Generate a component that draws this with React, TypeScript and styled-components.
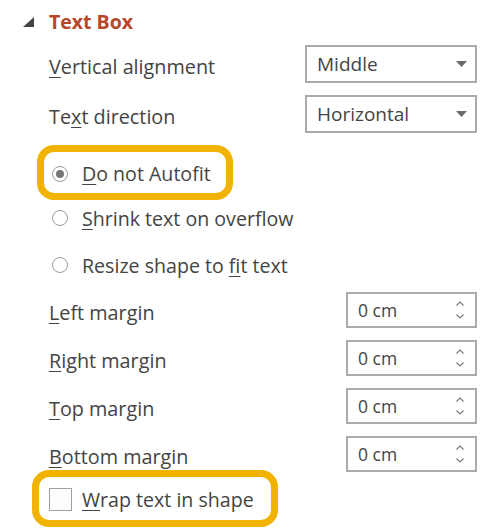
import React from "react";
import styled, { createGlobalStyle } from "styled-components";

const GlobalStyle = createGlobalStyle`
	html, body {
		margin: 0;
		padding: 0;
		background: #ffffff;
	}
	body {
		font-family: "Open Sans", "Noto Sans", sans-serif;
		color: #444444;
	}
`;

const Panel = styled.div`
	width: 493px;
	height: 529px;
	overflow: hidden;
	box-sizing: border-box;
`;

const Header = styled.div`
	display: flex;
	align-items: center;
	height: 42px;
	padding-left: 23px;
	gap: 15px;

	svg {
		margin-top: 1px;
	}
`;

const Title = styled.div`
	font-size: 19.5px;
	font-weight: 700;
	color: #b7472a;
`;

const Body = styled.div`
	display: flex;
	flex-direction: column;
	padding: 0 16px 0 49px;
`;

const FieldRow = styled.div<{ $top: number }>`
	display: flex;
	align-items: center;
	justify-content: space-between;
	margin-top: ${(p) => p.$top}px;
`;

const Label = styled.div`
	font-size: 19.8px;
	padding-top: 4px;
	white-space: nowrap;
`;

const Key = styled.span`
	text-decoration: underline;
	text-underline-offset: 3px;
	text-decoration-thickness: 1px;
`;

const SelectBox = styled.div`
	display: flex;
	align-items: center;
	justify-content: space-between;
	box-sizing: border-box;
	width: 172px;
	height: 38px;
	border: 2px solid #ababab;
	padding: 0 8px 0 10px;
	font-size: 19px;
	background: #fff;
`;

const SpinBox = styled.div`
	display: flex;
	align-items: center;
	justify-content: space-between;
	box-sizing: border-box;
	width: 131px;
	height: 36px;
	border: 2px solid #ababab;
	padding: 0 11px 0 10px;
	font-size: 17.5px;
	background: #fff;
`;

const Arrows = styled.div`
	display: flex;
	flex-direction: column;
	gap: 8px;
`;

const Highlight = styled.div<{ $left: number; $top: number; $padL: number; $padR: number; $gap: number }>`
	align-self: flex-start;
	display: flex;
	align-items: center;
	gap: ${(p) => p.$gap}px;
	box-sizing: border-box;
	margin-left: ${(p) => p.$left}px;
	margin-top: ${(p) => p.$top}px;
	border: 7px solid #f1b300;
	border-radius: 17px;
	padding: 2px ${(p) => p.$padR}px 0 ${(p) => p.$padL}px;
	background: #fff;
`;

const OptionRow = styled.div<{ $top: number }>`
	display: flex;
	align-items: center;
	gap: 14px;
	height: 36px;
	margin-left: 3px;
	margin-top: ${(p) => p.$top}px;
`;

const OptionText = styled.div<{ $line?: number }>`
	font-size: 19.6px;
	white-space: nowrap;
	line-height: ${(p) => (p.$line ? `${p.$line}px` : "normal")};
`;

const Radio = styled.span<{ $checked?: boolean }>`
	display: inline-flex;
	align-items: center;
	justify-content: center;
	box-sizing: border-box;
	width: 16px;
	height: 16px;
	border-radius: 50%;
	border: 1px solid #9a9a9a;
	background: #fff;

	&::after {
		content: "";
		display: ${(p) => (p.$checked ? "block" : "none")};
		width: 8px;
		height: 8px;
		border-radius: 50%;
		background: #777;
	}
`;

const CheckBox = styled.span`
	display: inline-block;
	box-sizing: border-box;
	width: 23px;
	height: 23px;
	border: 1px solid #a0a0a0;
	background: #fdfdfd;
`;

function Caret() {
	return (
		<svg width="11" height="6" viewBox="0 0 11 6">
			<polygon points="0,0 11,0 5.5,6" fill="#6a6a6a" />
		</svg>
	);
}

function Chevron({ up }: { up?: boolean }) {
	return (
		<svg width="8" height="5" viewBox="0 0 8 5">
			<polyline
				points={up ? "0.5,4.5 4,1 7.5,4.5" : "0.5,0.5 4,4 7.5,0.5"}
				fill="none"
				stroke="#777"
				strokeWidth="1.1"
			/>
		</svg>
	);
}

const margins = [
	{ key: "L", rest: "eft margin" },
	{ key: "R", rest: "ight margin" },
	{ key: "T", rest: "op margin" },
	{ key: "B", rest: "ottom margin" },
];

export default function App() {
	return (
		<Panel>
			<GlobalStyle />
			<Header>
				<svg width="11" height="10" viewBox="0 0 11 10">
					<polygon points="11,0 11,10 0,10" fill="#444" />
				</svg>
				<Title>Text Box</Title>
			</Header>
			<Body>
				<FieldRow $top={3}>
					<Label>
						<Key>V</Key>ertical alignment
					</Label>
					<SelectBox>
						Middle
						<Caret />
					</SelectBox>
				</FieldRow>
				<FieldRow $top={12}>
					<Label>
						Te<Key>x</Key>t direction
					</Label>
					<SelectBox>
						Horizontal
						<Caret />
					</SelectBox>
				</FieldRow>

				<Highlight $left={-12} $top={12} $padL={8} $padR={15} $gap={14}>
					<Radio $checked />
					<OptionText $line={39}>
						<Key>D</Key>o not Autofit
					</OptionText>
				</Highlight>
				<OptionRow $top={0}>
					<Radio />
					<OptionText>
						<Key>S</Key>hrink text on overflow
					</OptionText>
				</OptionRow>
				<OptionRow $top={11}>
					<Radio />
					<OptionText>
						Resize shape to <Key>f</Key>it text
					</OptionText>
				</OptionRow>

				{margins.map((m, i) => (
					<FieldRow key={m.key} $top={i === 0 ? 9 : 12}>
						<Label>
							<Key>{m.key}</Key>
							{m.rest}
						</Label>
						<SpinBox>
							0 cm
							<Arrows>
								<Chevron up />
								<Chevron />
							</Arrows>
						</SpinBox>
					</FieldRow>
				))}

				<Highlight $left={-17} $top={-2} $padL={10} $padR={17} $gap={10}>
					<CheckBox />
					<OptionText $line={41}>
						<Key>W</Key>rap text in shape
					</OptionText>
				</Highlight>
			</Body>
		</Panel>
	);
}
